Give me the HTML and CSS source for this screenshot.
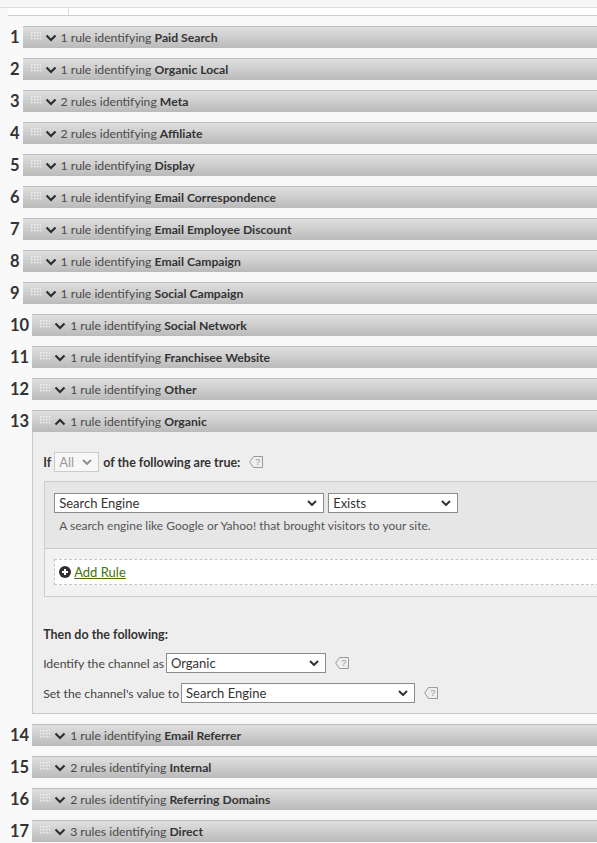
FILE: index.html
```html
<!DOCTYPE html>
<html lang="en">
<head>
<meta charset="utf-8">
<title>Marketing Channel Rules</title>
<link rel="stylesheet" href="styles.css">
</head>
<body>
<div class="topstrip"></div>
<div class="tabs"><div class="tab"></div></div>
<div class="list">
  <div class="row"><div class="num">1</div><div class="item"><div class="bar"><svg class="grip" viewBox="0 0 10 8"><g fill="#f2f2f2"><rect x="0" y="0" width="1.4" height="1.4"/><rect x="3" y="0" width="1.4" height="1.4"/><rect x="6" y="0" width="1.4" height="1.4"/><rect x="9" y="0" width="1" height="1.4"/><rect x="0" y="3" width="1.4" height="1.4"/><rect x="3" y="3" width="1.4" height="1.4"/><rect x="6" y="3" width="1.4" height="1.4"/><rect x="9" y="3" width="1" height="1.4"/><rect x="0" y="6" width="1.4" height="1.4"/><rect x="3" y="6" width="1.4" height="1.4"/><rect x="6" y="6" width="1.4" height="1.4"/><rect x="9" y="6" width="1" height="1.4"/></g></svg><svg class="chev" viewBox="0 0 12 8"><path d="M1.5 1.5 L6 6 L10.5 1.5" fill="none" stroke="#2e2e2e" stroke-width="2.2"/></svg><span class="label">1 rule identifying <b>Paid Search</b></span></div></div></div>
  <div class="row"><div class="num">2</div><div class="item"><div class="bar"><svg class="grip" viewBox="0 0 10 8"><g fill="#f2f2f2"><rect x="0" y="0" width="1.4" height="1.4"/><rect x="3" y="0" width="1.4" height="1.4"/><rect x="6" y="0" width="1.4" height="1.4"/><rect x="9" y="0" width="1" height="1.4"/><rect x="0" y="3" width="1.4" height="1.4"/><rect x="3" y="3" width="1.4" height="1.4"/><rect x="6" y="3" width="1.4" height="1.4"/><rect x="9" y="3" width="1" height="1.4"/><rect x="0" y="6" width="1.4" height="1.4"/><rect x="3" y="6" width="1.4" height="1.4"/><rect x="6" y="6" width="1.4" height="1.4"/><rect x="9" y="6" width="1" height="1.4"/></g></svg><svg class="chev" viewBox="0 0 12 8"><path d="M1.5 1.5 L6 6 L10.5 1.5" fill="none" stroke="#2e2e2e" stroke-width="2.2"/></svg><span class="label">1 rule identifying <b>Organic Local</b></span></div></div></div>
  <div class="row"><div class="num">3</div><div class="item"><div class="bar"><svg class="grip" viewBox="0 0 10 8"><g fill="#f2f2f2"><rect x="0" y="0" width="1.4" height="1.4"/><rect x="3" y="0" width="1.4" height="1.4"/><rect x="6" y="0" width="1.4" height="1.4"/><rect x="9" y="0" width="1" height="1.4"/><rect x="0" y="3" width="1.4" height="1.4"/><rect x="3" y="3" width="1.4" height="1.4"/><rect x="6" y="3" width="1.4" height="1.4"/><rect x="9" y="3" width="1" height="1.4"/><rect x="0" y="6" width="1.4" height="1.4"/><rect x="3" y="6" width="1.4" height="1.4"/><rect x="6" y="6" width="1.4" height="1.4"/><rect x="9" y="6" width="1" height="1.4"/></g></svg><svg class="chev" viewBox="0 0 12 8"><path d="M1.5 1.5 L6 6 L10.5 1.5" fill="none" stroke="#2e2e2e" stroke-width="2.2"/></svg><span class="label">2 rules identifying <b>Meta</b></span></div></div></div>
  <div class="row"><div class="num">4</div><div class="item"><div class="bar"><svg class="grip" viewBox="0 0 10 8"><g fill="#f2f2f2"><rect x="0" y="0" width="1.4" height="1.4"/><rect x="3" y="0" width="1.4" height="1.4"/><rect x="6" y="0" width="1.4" height="1.4"/><rect x="9" y="0" width="1" height="1.4"/><rect x="0" y="3" width="1.4" height="1.4"/><rect x="3" y="3" width="1.4" height="1.4"/><rect x="6" y="3" width="1.4" height="1.4"/><rect x="9" y="3" width="1" height="1.4"/><rect x="0" y="6" width="1.4" height="1.4"/><rect x="3" y="6" width="1.4" height="1.4"/><rect x="6" y="6" width="1.4" height="1.4"/><rect x="9" y="6" width="1" height="1.4"/></g></svg><svg class="chev" viewBox="0 0 12 8"><path d="M1.5 1.5 L6 6 L10.5 1.5" fill="none" stroke="#2e2e2e" stroke-width="2.2"/></svg><span class="label">2 rules identifying <b>Affiliate</b></span></div></div></div>
  <div class="row"><div class="num">5</div><div class="item"><div class="bar"><svg class="grip" viewBox="0 0 10 8"><g fill="#f2f2f2"><rect x="0" y="0" width="1.4" height="1.4"/><rect x="3" y="0" width="1.4" height="1.4"/><rect x="6" y="0" width="1.4" height="1.4"/><rect x="9" y="0" width="1" height="1.4"/><rect x="0" y="3" width="1.4" height="1.4"/><rect x="3" y="3" width="1.4" height="1.4"/><rect x="6" y="3" width="1.4" height="1.4"/><rect x="9" y="3" width="1" height="1.4"/><rect x="0" y="6" width="1.4" height="1.4"/><rect x="3" y="6" width="1.4" height="1.4"/><rect x="6" y="6" width="1.4" height="1.4"/><rect x="9" y="6" width="1" height="1.4"/></g></svg><svg class="chev" viewBox="0 0 12 8"><path d="M1.5 1.5 L6 6 L10.5 1.5" fill="none" stroke="#2e2e2e" stroke-width="2.2"/></svg><span class="label">1 rule identifying <b>Display</b></span></div></div></div>
  <div class="row"><div class="num">6</div><div class="item"><div class="bar"><svg class="grip" viewBox="0 0 10 8"><g fill="#f2f2f2"><rect x="0" y="0" width="1.4" height="1.4"/><rect x="3" y="0" width="1.4" height="1.4"/><rect x="6" y="0" width="1.4" height="1.4"/><rect x="9" y="0" width="1" height="1.4"/><rect x="0" y="3" width="1.4" height="1.4"/><rect x="3" y="3" width="1.4" height="1.4"/><rect x="6" y="3" width="1.4" height="1.4"/><rect x="9" y="3" width="1" height="1.4"/><rect x="0" y="6" width="1.4" height="1.4"/><rect x="3" y="6" width="1.4" height="1.4"/><rect x="6" y="6" width="1.4" height="1.4"/><rect x="9" y="6" width="1" height="1.4"/></g></svg><svg class="chev" viewBox="0 0 12 8"><path d="M1.5 1.5 L6 6 L10.5 1.5" fill="none" stroke="#2e2e2e" stroke-width="2.2"/></svg><span class="label">1 rule identifying <b>Email Correspondence</b></span></div></div></div>
  <div class="row"><div class="num">7</div><div class="item"><div class="bar"><svg class="grip" viewBox="0 0 10 8"><g fill="#f2f2f2"><rect x="0" y="0" width="1.4" height="1.4"/><rect x="3" y="0" width="1.4" height="1.4"/><rect x="6" y="0" width="1.4" height="1.4"/><rect x="9" y="0" width="1" height="1.4"/><rect x="0" y="3" width="1.4" height="1.4"/><rect x="3" y="3" width="1.4" height="1.4"/><rect x="6" y="3" width="1.4" height="1.4"/><rect x="9" y="3" width="1" height="1.4"/><rect x="0" y="6" width="1.4" height="1.4"/><rect x="3" y="6" width="1.4" height="1.4"/><rect x="6" y="6" width="1.4" height="1.4"/><rect x="9" y="6" width="1" height="1.4"/></g></svg><svg class="chev" viewBox="0 0 12 8"><path d="M1.5 1.5 L6 6 L10.5 1.5" fill="none" stroke="#2e2e2e" stroke-width="2.2"/></svg><span class="label">1 rule identifying <b>Email Employee Discount</b></span></div></div></div>
  <div class="row"><div class="num">8</div><div class="item"><div class="bar"><svg class="grip" viewBox="0 0 10 8"><g fill="#f2f2f2"><rect x="0" y="0" width="1.4" height="1.4"/><rect x="3" y="0" width="1.4" height="1.4"/><rect x="6" y="0" width="1.4" height="1.4"/><rect x="9" y="0" width="1" height="1.4"/><rect x="0" y="3" width="1.4" height="1.4"/><rect x="3" y="3" width="1.4" height="1.4"/><rect x="6" y="3" width="1.4" height="1.4"/><rect x="9" y="3" width="1" height="1.4"/><rect x="0" y="6" width="1.4" height="1.4"/><rect x="3" y="6" width="1.4" height="1.4"/><rect x="6" y="6" width="1.4" height="1.4"/><rect x="9" y="6" width="1" height="1.4"/></g></svg><svg class="chev" viewBox="0 0 12 8"><path d="M1.5 1.5 L6 6 L10.5 1.5" fill="none" stroke="#2e2e2e" stroke-width="2.2"/></svg><span class="label">1 rule identifying <b>Email Campaign</b></span></div></div></div>
  <div class="row"><div class="num">9</div><div class="item"><div class="bar"><svg class="grip" viewBox="0 0 10 8"><g fill="#f2f2f2"><rect x="0" y="0" width="1.4" height="1.4"/><rect x="3" y="0" width="1.4" height="1.4"/><rect x="6" y="0" width="1.4" height="1.4"/><rect x="9" y="0" width="1" height="1.4"/><rect x="0" y="3" width="1.4" height="1.4"/><rect x="3" y="3" width="1.4" height="1.4"/><rect x="6" y="3" width="1.4" height="1.4"/><rect x="9" y="3" width="1" height="1.4"/><rect x="0" y="6" width="1.4" height="1.4"/><rect x="3" y="6" width="1.4" height="1.4"/><rect x="6" y="6" width="1.4" height="1.4"/><rect x="9" y="6" width="1" height="1.4"/></g></svg><svg class="chev" viewBox="0 0 12 8"><path d="M1.5 1.5 L6 6 L10.5 1.5" fill="none" stroke="#2e2e2e" stroke-width="2.2"/></svg><span class="label">1 rule identifying <b>Social Campaign</b></span></div></div></div>
  <div class="row"><div class="num">10</div><div class="item"><div class="bar"><svg class="grip" viewBox="0 0 10 8"><g fill="#f2f2f2"><rect x="0" y="0" width="1.4" height="1.4"/><rect x="3" y="0" width="1.4" height="1.4"/><rect x="6" y="0" width="1.4" height="1.4"/><rect x="9" y="0" width="1" height="1.4"/><rect x="0" y="3" width="1.4" height="1.4"/><rect x="3" y="3" width="1.4" height="1.4"/><rect x="6" y="3" width="1.4" height="1.4"/><rect x="9" y="3" width="1" height="1.4"/><rect x="0" y="6" width="1.4" height="1.4"/><rect x="3" y="6" width="1.4" height="1.4"/><rect x="6" y="6" width="1.4" height="1.4"/><rect x="9" y="6" width="1" height="1.4"/></g></svg><svg class="chev" viewBox="0 0 12 8"><path d="M1.5 1.5 L6 6 L10.5 1.5" fill="none" stroke="#2e2e2e" stroke-width="2.2"/></svg><span class="label">1 rule identifying <b>Social Network</b></span></div></div></div>
  <div class="row"><div class="num">11</div><div class="item"><div class="bar"><svg class="grip" viewBox="0 0 10 8"><g fill="#f2f2f2"><rect x="0" y="0" width="1.4" height="1.4"/><rect x="3" y="0" width="1.4" height="1.4"/><rect x="6" y="0" width="1.4" height="1.4"/><rect x="9" y="0" width="1" height="1.4"/><rect x="0" y="3" width="1.4" height="1.4"/><rect x="3" y="3" width="1.4" height="1.4"/><rect x="6" y="3" width="1.4" height="1.4"/><rect x="9" y="3" width="1" height="1.4"/><rect x="0" y="6" width="1.4" height="1.4"/><rect x="3" y="6" width="1.4" height="1.4"/><rect x="6" y="6" width="1.4" height="1.4"/><rect x="9" y="6" width="1" height="1.4"/></g></svg><svg class="chev" viewBox="0 0 12 8"><path d="M1.5 1.5 L6 6 L10.5 1.5" fill="none" stroke="#2e2e2e" stroke-width="2.2"/></svg><span class="label">1 rule identifying <b>Franchisee Website</b></span></div></div></div>
  <div class="row"><div class="num">12</div><div class="item"><div class="bar"><svg class="grip" viewBox="0 0 10 8"><g fill="#f2f2f2"><rect x="0" y="0" width="1.4" height="1.4"/><rect x="3" y="0" width="1.4" height="1.4"/><rect x="6" y="0" width="1.4" height="1.4"/><rect x="9" y="0" width="1" height="1.4"/><rect x="0" y="3" width="1.4" height="1.4"/><rect x="3" y="3" width="1.4" height="1.4"/><rect x="6" y="3" width="1.4" height="1.4"/><rect x="9" y="3" width="1" height="1.4"/><rect x="0" y="6" width="1.4" height="1.4"/><rect x="3" y="6" width="1.4" height="1.4"/><rect x="6" y="6" width="1.4" height="1.4"/><rect x="9" y="6" width="1" height="1.4"/></g></svg><svg class="chev" viewBox="0 0 12 8"><path d="M1.5 1.5 L6 6 L10.5 1.5" fill="none" stroke="#2e2e2e" stroke-width="2.2"/></svg><span class="label">1 rule identifying <b>Other</b></span></div></div></div>
  <div class="row"><div class="num">13</div><div class="item">
    <div class="bar"><svg class="grip" viewBox="0 0 10 8"><g fill="#f2f2f2"><rect x="0" y="0" width="1.4" height="1.4"/><rect x="3" y="0" width="1.4" height="1.4"/><rect x="6" y="0" width="1.4" height="1.4"/><rect x="9" y="0" width="1" height="1.4"/><rect x="0" y="3" width="1.4" height="1.4"/><rect x="3" y="3" width="1.4" height="1.4"/><rect x="6" y="3" width="1.4" height="1.4"/><rect x="9" y="3" width="1" height="1.4"/><rect x="0" y="6" width="1.4" height="1.4"/><rect x="3" y="6" width="1.4" height="1.4"/><rect x="6" y="6" width="1.4" height="1.4"/><rect x="9" y="6" width="1" height="1.4"/></g></svg><svg class="chev" viewBox="0 0 12 8"><path d="M1.5 6.5 L6 2 L10.5 6.5" fill="none" stroke="#2e2e2e" stroke-width="2.2"/></svg><span class="label">1 rule identifying <b>Organic</b></span></div>
    <div class="panel">
      <div class="cond">
        <b>If</b>
        <div class="sel sel-muted sel-all"><span>All</span><svg class="schev" viewBox="0 0 10 6"><path d="M1 1 L5 5 L9 1" fill="none" stroke="#8a8a8a" stroke-width="1.8"/></svg></div>
        <b>of the following are true:</b>
        <svg class="help" viewBox="0 0 14 12"><path d="M4.5 0.5 H13.5 V11.5 H4.5 L0.7 6 Z" fill="none" stroke="#9a9a9a" stroke-width="1"/><text x="8.8" y="9.2" font-size="9" text-anchor="middle" fill="#9a9a9a" font-family="Liberation Sans, sans-serif">?</text></svg>
      </div>
      <div class="rules">
        <div class="rule">
          <div class="rule-sels">
            <div class="sel sel-engine"><span>Search Engine</span><svg class="schev" viewBox="0 0 10 6"><path d="M1 1 L5 5 L9 1" fill="none" stroke="#333" stroke-width="2"/></svg></div>
            <div class="sel sel-exists"><span>Exists</span><svg class="schev" viewBox="0 0 10 6"><path d="M1 1 L5 5 L9 1" fill="none" stroke="#333" stroke-width="2"/></svg></div>
          </div>
          <p class="desc">A search engine like Google or Yahoo! that brought visitors to your site.</p>
        </div>
        <div class="add-wrap">
          <div class="add">
            <svg class="plus" viewBox="0 0 12 12"><circle cx="6" cy="6" r="6" fill="#2f2f2f"/><path d="M6 3 V9 M3 6 H9" stroke="#fff" stroke-width="2"/></svg>
            <a href="#" class="add-link">Add Rule</a>
          </div>
        </div>
      </div>
      <div class="then">Then do the following:</div>
      <div class="line">
        <span>Identify the channel as</span>
        <div class="sel sel-channel"><span>Organic</span><svg class="schev" viewBox="0 0 10 6"><path d="M1 1 L5 5 L9 1" fill="none" stroke="#333" stroke-width="2"/></svg></div>
        <svg class="help" viewBox="0 0 14 12"><path d="M4.5 0.5 H13.5 V11.5 H4.5 L0.7 6 Z" fill="none" stroke="#9a9a9a" stroke-width="1"/><text x="8.8" y="9.2" font-size="9" text-anchor="middle" fill="#9a9a9a" font-family="Liberation Sans, sans-serif">?</text></svg>
      </div>
      <div class="line">
        <span>Set the channel's value to</span>
        <div class="sel sel-value"><span>Search Engine</span><svg class="schev" viewBox="0 0 10 6"><path d="M1 1 L5 5 L9 1" fill="none" stroke="#333" stroke-width="2"/></svg></div>
        <svg class="help" viewBox="0 0 14 12"><path d="M4.5 0.5 H13.5 V11.5 H4.5 L0.7 6 Z" fill="none" stroke="#9a9a9a" stroke-width="1"/><text x="8.8" y="9.2" font-size="9" text-anchor="middle" fill="#9a9a9a" font-family="Liberation Sans, sans-serif">?</text></svg>
      </div>
    </div>
  </div></div>
  <div class="row"><div class="num">14</div><div class="item"><div class="bar"><svg class="grip" viewBox="0 0 10 8"><g fill="#f2f2f2"><rect x="0" y="0" width="1.4" height="1.4"/><rect x="3" y="0" width="1.4" height="1.4"/><rect x="6" y="0" width="1.4" height="1.4"/><rect x="9" y="0" width="1" height="1.4"/><rect x="0" y="3" width="1.4" height="1.4"/><rect x="3" y="3" width="1.4" height="1.4"/><rect x="6" y="3" width="1.4" height="1.4"/><rect x="9" y="3" width="1" height="1.4"/><rect x="0" y="6" width="1.4" height="1.4"/><rect x="3" y="6" width="1.4" height="1.4"/><rect x="6" y="6" width="1.4" height="1.4"/><rect x="9" y="6" width="1" height="1.4"/></g></svg><svg class="chev" viewBox="0 0 12 8"><path d="M1.5 1.5 L6 6 L10.5 1.5" fill="none" stroke="#2e2e2e" stroke-width="2.2"/></svg><span class="label">1 rule identifying <b>Email Referrer</b></span></div></div></div>
  <div class="row"><div class="num">15</div><div class="item"><div class="bar"><svg class="grip" viewBox="0 0 10 8"><g fill="#f2f2f2"><rect x="0" y="0" width="1.4" height="1.4"/><rect x="3" y="0" width="1.4" height="1.4"/><rect x="6" y="0" width="1.4" height="1.4"/><rect x="9" y="0" width="1" height="1.4"/><rect x="0" y="3" width="1.4" height="1.4"/><rect x="3" y="3" width="1.4" height="1.4"/><rect x="6" y="3" width="1.4" height="1.4"/><rect x="9" y="3" width="1" height="1.4"/><rect x="0" y="6" width="1.4" height="1.4"/><rect x="3" y="6" width="1.4" height="1.4"/><rect x="6" y="6" width="1.4" height="1.4"/><rect x="9" y="6" width="1" height="1.4"/></g></svg><svg class="chev" viewBox="0 0 12 8"><path d="M1.5 1.5 L6 6 L10.5 1.5" fill="none" stroke="#2e2e2e" stroke-width="2.2"/></svg><span class="label">2 rules identifying <b>Internal</b></span></div></div></div>
  <div class="row"><div class="num">16</div><div class="item"><div class="bar"><svg class="grip" viewBox="0 0 10 8"><g fill="#f2f2f2"><rect x="0" y="0" width="1.4" height="1.4"/><rect x="3" y="0" width="1.4" height="1.4"/><rect x="6" y="0" width="1.4" height="1.4"/><rect x="9" y="0" width="1" height="1.4"/><rect x="0" y="3" width="1.4" height="1.4"/><rect x="3" y="3" width="1.4" height="1.4"/><rect x="6" y="3" width="1.4" height="1.4"/><rect x="9" y="3" width="1" height="1.4"/><rect x="0" y="6" width="1.4" height="1.4"/><rect x="3" y="6" width="1.4" height="1.4"/><rect x="6" y="6" width="1.4" height="1.4"/><rect x="9" y="6" width="1" height="1.4"/></g></svg><svg class="chev" viewBox="0 0 12 8"><path d="M1.5 1.5 L6 6 L10.5 1.5" fill="none" stroke="#2e2e2e" stroke-width="2.2"/></svg><span class="label">2 rules identifying <b>Referring Domains</b></span></div></div></div>
  <div class="row"><div class="num">17</div><div class="item"><div class="bar"><svg class="grip" viewBox="0 0 10 8"><g fill="#f2f2f2"><rect x="0" y="0" width="1.4" height="1.4"/><rect x="3" y="0" width="1.4" height="1.4"/><rect x="6" y="0" width="1.4" height="1.4"/><rect x="9" y="0" width="1" height="1.4"/><rect x="0" y="3" width="1.4" height="1.4"/><rect x="3" y="3" width="1.4" height="1.4"/><rect x="6" y="3" width="1.4" height="1.4"/><rect x="9" y="3" width="1" height="1.4"/><rect x="0" y="6" width="1.4" height="1.4"/><rect x="3" y="6" width="1.4" height="1.4"/><rect x="6" y="6" width="1.4" height="1.4"/><rect x="9" y="6" width="1" height="1.4"/></g></svg><svg class="chev" viewBox="0 0 12 8"><path d="M1.5 1.5 L6 6 L10.5 1.5" fill="none" stroke="#2e2e2e" stroke-width="2.2"/></svg><span class="label">3 rules identifying <b>Direct</b></span></div></div></div>
</div>
</body>
</html>
```
FILE: styles.css
```css
html, body {
  margin: 0;
  padding: 0;
  overflow: hidden;
}
body {
  background: #f9f9f9;
  font-family: Lato, "Open Sans", sans-serif;
  color: #4b4b4b;
  font-size: 12.5px;
  width: 640px;
}
.topstrip {
  height: 7px;
  background: #f6f6f6;
  border-bottom: 1px solid #dedede;
}
.tabs {
  margin-left: 8px;
  height: 7px;
  background: #fff;
  border-bottom: 1px solid #cfcfcf;
  display: flex;
}
.tab {
  width: 60px;
  border-right: 1px solid #dcdcdc;
}
.list {
  display: flex;
  flex-direction: column;
  gap: 10px;
  padding-top: 10px;
}
.row {
  display: flex;
  align-items: flex-start;
}
.num {
  padding-left: 10px;
  padding-right: 3px;
  font-size: 16.5px;
  font-weight: 700;
  line-height: 22px;
  color: #333;
}
.item {
  flex: 1;
  min-width: 0;
}
.bar {
  height: 22px;
  box-sizing: border-box;
  border-top: 1px solid #bdbdbd;
  background: linear-gradient(#e0e0e0, #bababa);
  display: flex;
  align-items: center;
  padding-left: 8px;
  white-space: nowrap;
}
.grip {
  width: 10px;
  height: 8px;
  margin-top: -3px;
}
.chev {
  width: 12px;
  height: 8px;
  margin-left: 4px;
}
.label {
  margin-left: 4px;
  font-size: 12.2px;
  color: #4a4a4a;
}
.label b {
  color: #333;
  font-weight: 700;
}
.panel {
  background: #eeeeee;
  border: 1px solid #c8c8c8;
  border-top: none;
  padding: 20px 0 10px 10px;
}
.cond {
  display: flex;
  align-items: center;
  gap: 3px;
  color: #333;
}
.cond b {
  font-weight: 700;
}
.sel {
  height: 20px;
  box-sizing: border-box;
  border: 1px solid #8c8c8c;
  background: #fff;
  display: flex;
  align-items: center;
  justify-content: space-between;
  padding: 0 6px 0 4px;
  color: #333;
  font-size: 13px;
}
.schev {
  width: 10px;
  height: 6px;
}
.sel-muted {
  border-color: #cccccc;
  background: #f7f7f7;
  color: #999;
}
.sel-all {
  width: 45px;
  margin: 0 1px 0 0;
}
.help {
  width: 14px;
  height: 12px;
  margin-left: 6px;
}
.rules {
  margin-top: 9px;
  margin-left: 1px;
  border: 1px solid #cccccc;
  border-right: none;
}
.rule {
  background: #e6e6e6;
  padding: 11px 0 0 9px;
  height: 67px;
  box-sizing: border-box;
  border-bottom: 1px solid #cccccc;
}
.rule-sels {
  display: flex;
  gap: 4px;
}
.sel-engine {
  width: 270px;
}
.sel-exists {
  width: 130px;
}
.desc {
  margin: 5px 0 0 5px;
  font-size: 12px;
  color: #555;
}
.add-wrap {
  background: #f2f2f2;
  padding: 10px 0 11px 9px;
}
.add {
  height: 26px;
  box-sizing: border-box;
  border: 1px dashed #c4c4c4;
  border-right: none;
  background: #fff;
  display: flex;
  align-items: center;
  padding-left: 4px;
  gap: 3px;
}
.plus {
  width: 12px;
  height: 12px;
}
.add-link {
  color: #44700f;
  text-decoration: underline;
  font-size: 13px;
}
.then {
  margin-top: 30px;
  font-weight: 700;
  color: #333;
  line-height: 16px;
}
.line {
  display: flex;
  align-items: center;
  margin-top: 10px;
  color: #444;
  font-size: 12.2px;
  gap: 2px;
}
.sel-channel {
  width: 160px;
}
.sel-value {
  width: 234px;
}
.line .help {
  margin-left: 7px;
}
```
